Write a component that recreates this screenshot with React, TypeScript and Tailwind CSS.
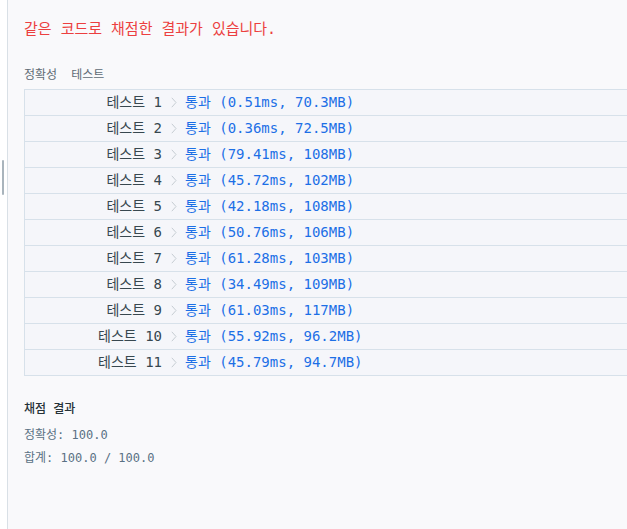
const rows: [string, string][] = [
  ["1", "(0.51ms, 70.3MB)"],
  ["2", "(0.36ms, 72.5MB)"],
  ["3", "(79.41ms, 108MB)"],
  ["4", "(45.72ms, 102MB)"],
  ["5", "(42.18ms, 108MB)"],
  ["6", "(50.76ms, 106MB)"],
  ["7", "(61.28ms, 103MB)"],
  ["8", "(34.49ms, 109MB)"],
  ["9", "(61.03ms, 117MB)"],
  ["10", "(55.92ms, 96.2MB)"],
  ["11", "(45.79ms, 94.7MB)"],
];

const mono = "font-['DejaVu_Sans_Mono','Noto_Sans_CJK_KR',monospace]";

const App = () => {
  return (
    <div className="relative h-[529px] w-[627px] overflow-hidden bg-white">
      {/* scroll handle */}
      <div className="absolute left-[2px] top-[160px] h-[35px] w-[2px] rounded bg-[#a9b4bc]" />
      <div className={`ml-[7px] h-full w-[660px] border-l border-[#d9e0e6] bg-[#f9f9fb] pl-4 ${mono}`}>
        <p className="pt-[18px] text-[15px] leading-[22px] text-[#ec3f3f]">
          같은 코드로 채점한 결과가 있습니다.
        </p>
        <p className="mt-[27px] flex gap-[14px] text-[12px] leading-[16px] text-[#5f6b75]">
          <span>정확성</span>
          <span>테스트</span>
        </p>
        <div className="mt-[6px] w-[640px] border-t border-l border-[#d7e1ea] bg-[#f5f6fa] text-[14px]">
          {rows.map(([n, r]) => (
            <div key={n} className="flex h-[26px] items-center border-b border-[#d7e1ea] whitespace-nowrap">
              <span className="w-[137px] text-right text-[#37474f]">테스트 {n}</span>
              <span className="flex w-[23px] justify-center">
                <svg width="6" height="11" viewBox="0 0 6 11" fill="none">
                  <path d="M0.8 0.8 L5 5.5 L0.8 10.2" stroke="#c5ccd2" strokeWidth="1" />
                </svg>
              </span>
              <span className="text-[#1c6fe6]">통과 {r}</span>
            </div>
          ))}
        </div>
        <p className="mt-[25px] text-[12px] font-medium leading-[16px] text-[#263238]">채점 결과</p>
        <p className="mt-[10px] text-[12px] leading-[16px] text-[#5a7184]">정확성: 100.0</p>
        <p className="mt-[7px] text-[12px] leading-[16px] text-[#5a7184]">합계: 100.0 / 100.0</p>
      </div>
    </div>
  );
};

export default App;
